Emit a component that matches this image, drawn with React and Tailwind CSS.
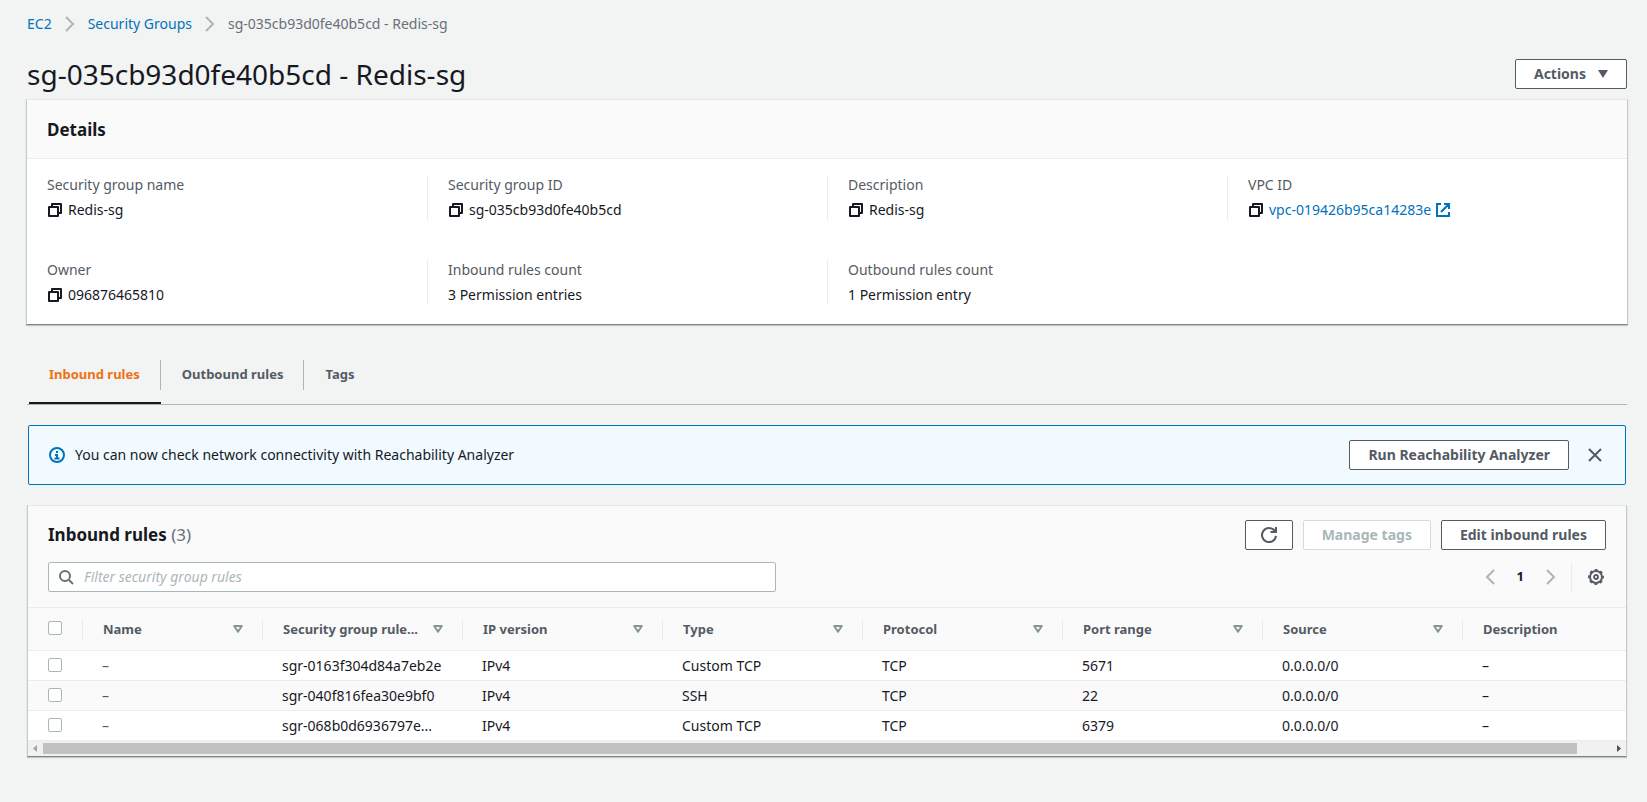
import { useState } from 'react'
import clsx from 'clsx'

const RULES = [
  { id: 'sgr-0163f304d84a7eb2e', name: '–', ip: 'IPv4', type: 'Custom TCP', protocol: 'TCP', port: '5671', source: '0.0.0.0/0', description: '–' },
  { id: 'sgr-040f816fea30e9bf0', name: '–', ip: 'IPv4', type: 'SSH', protocol: 'TCP', port: '22', source: '0.0.0.0/0', description: '–' },
  { id: 'sgr-068b0d6936797e...', name: '–', ip: 'IPv4', type: 'Custom TCP', protocol: 'TCP', port: '6379', source: '0.0.0.0/0', description: '–' },
]

const COLUMNS = [
  { key: 'name', label: 'Name', sortable: true },
  { key: 'id', label: 'Security group rule...', sortable: true },
  { key: 'ip', label: 'IP version', sortable: true },
  { key: 'type', label: 'Type', sortable: true },
  { key: 'protocol', label: 'Protocol', sortable: true },
  { key: 'port', label: 'Port range', sortable: true },
  { key: 'source', label: 'Source', sortable: true },
  { key: 'description', label: 'Description', sortable: false },
]

const DETAILS = [
  { label: 'Security group name', value: 'Redis-sg', copy: true },
  { label: 'Security group ID', value: 'sg-035cb93d0fe40b5cd', copy: true },
  { label: 'Description', value: 'Redis-sg', copy: true },
  { label: 'VPC ID', value: 'vpc-019426b95ca14283e', copy: true, link: true },
  { label: 'Owner', value: '096876465810', copy: true },
  { label: 'Inbound rules count', value: '3 Permission entries' },
  { label: 'Outbound rules count', value: '1 Permission entry' },
]

const TABS = ['Inbound rules', 'Outbound rules', 'Tags']

function Icon({ children, className }) {
  return (
    <svg viewBox="0 0 16 16" className={clsx('size-4 shrink-0 fill-none stroke-current stroke-2', className)} aria-hidden="true">
      {children}
    </svg>
  )
}

const CopyIcon = () => <Icon><path d="M2 5h9v9H2zM5 5V2h9v9h-3" strokeLinejoin="round" /></Icon>
const ExternalIcon = () => <Icon><path d="M6 2H2v12h12v-4M9 2h5v5M14 2L6 10" /></Icon>
const ChevronIcon = ({ left, className }) => <Icon className={className}><path d={left ? 'M12 1L5 8l7 7' : 'M4 1l7 7-7 7'} /></Icon>

function GearIcon() {
  return (
    <Icon>
      <circle cx="8" cy="8" r="6" />
      {/* eight teeth around the rim */}
      <circle cx="8" cy="8" r="7.2" strokeWidth="1.6" strokeDasharray="2.83 2.83" strokeDashoffset="1.41" />
      <circle cx="8" cy="8" r="2" strokeWidth="1.8" />
    </Icon>
  )
}

function Caret({ hollow }) {
  return (
    <svg viewBox="0 0 10 8" className="h-2 w-[10px] shrink-0" aria-hidden="true">
      {hollow
        ? <path d="M1.2 1h7.6L5 6.8z" fill="none" stroke="currentColor" strokeWidth="2" strokeLinejoin="round" />
        : <path d="M0 0h10L5 8z" fill="currentColor" />}
    </svg>
  )
}

function Button({ children, className, ...props }) {
  return (
    <button
      type="button"
      className={clsx(
        'flex h-[30px] items-center justify-center gap-3 rounded-[2px] border border-[#545b64] bg-white text-sm font-bold text-[#545b64]',
        'disabled:border-[#d5dbdb] disabled:text-[#aab7b8]',
        className,
      )}
      {...props}
    >
      {children}
    </button>
  )
}

function Card({ children, className }) {
  return (
    <section className={clsx('border border-x-[#c4caca] border-t-[#e4e8e8] border-b-[#7b8585] bg-white shadow-[0_1px_1px_rgba(0,28,36,0.2)]', className)}>
      {children}
    </section>
  )
}

function Checkbox({ label }) {
  return (
    <input
      type="checkbox"
      aria-label={label}
      className="block size-[14px] appearance-none rounded-[2px] border border-[#aab7b8] bg-white checked:bg-[#0073bb]"
    />
  )
}

function Breadcrumbs() {
  return (
    <nav aria-label="Breadcrumbs">
      <ol className="flex items-center gap-[10px] text-sm">
        <li><a href="#ec2" className="text-[#0073bb]">EC2</a></li>
        <li className="flex items-center gap-[10px]">
          <ChevronIcon className="text-[#aab7b8]" />
          <a href="#groups" className="text-[#0073bb]">Security Groups</a>
        </li>
        <li className="flex items-center gap-[10px] text-[#687078]">
          <ChevronIcon className="text-[#aab7b8]" />
          sg-035cb93d0fe40b5cd - Redis-sg
        </li>
      </ol>
    </nav>
  )
}

function Details() {
  return (
    <Card className="-mx-px">
      <h2 className="border-b border-[#eaeded] bg-[#fafafa] px-5 pt-[17px] pb-[15px] text-[17px] leading-[26px] font-bold">Details</h2>
      <dl className="grid grid-cols-4 gap-y-10 pt-4 pb-[19px]">
        {DETAILS.map((d, i) => (
          <div key={d.label} className={clsx('flex flex-col gap-[5px] pl-5 text-sm', i % 4 !== 0 && 'border-l border-[#eaeded]')}>
            <dt className="text-[#545b64]">{d.label}</dt>
            <dd className="flex items-center gap-[5px]">
              {d.copy && <button type="button" aria-label={'Copy ' + d.label}><CopyIcon /></button>}
              {d.link
                ? <a href="#vpc" className="flex items-center gap-1 text-[#0073bb]">{d.value}<ExternalIcon /></a>
                : d.value}
            </dd>
          </div>
        ))}
      </dl>
    </Card>
  )
}

function Tabs({ active, onChange }) {
  return (
    <div role="tablist" className="flex gap-px border-b border-[#aab7b8] pl-[2px]">
      {TABS.map((t, i) => (
        <button
          key={t}
          type="button"
          role="tab"
          aria-selected={t === active}
          onClick={() => onChange(t)}
          className={clsx('border-b-2 pb-3 text-[13px] font-bold', t === active ? 'border-[#16191f] text-[#ec7211]' : 'border-transparent text-[#545b64]')}
        >
          <span className={clsx('flex h-[30px] items-center px-5', i < TABS.length - 1 && 'border-r border-[#aab7b8]')}>{t}</span>
        </button>
      ))}
    </div>
  )
}

function ReachabilityBanner({ onClose }) {
  return (
    <div className="mx-px flex items-center gap-[10px] rounded-[2px] border border-[#0073bb] bg-[#f1faff] py-[14px] pr-[22px] pl-5 text-sm">
      <Icon className="text-[#0073bb]">
        <circle cx="8" cy="8" r="7" />
        <path d="M7 5h2M6 8h2v3M5.5 11.5h5" />
      </Icon>
      <p className="flex-1">You can now check network connectivity with Reachability Analyzer</p>
      <Button className="px-[18px]">Run Reachability Analyzer</Button>
      <button type="button" aria-label="Dismiss" onClick={onClose} className="ml-2 text-[#545b64]">
        <Icon><path d="M2 2l12 12M14 2L2 14" /></Icon>
      </button>
    </div>
  )
}

function RulesTable() {
  return (
    <div className="overflow-x-auto [scrollbar-width:none]">
      <table className="w-[1634px] table-fixed border-collapse text-left text-sm">
        <colgroup>
          <col className="w-[54px]" />
          <col className="w-[180px]" />
          <col span="7" className="w-[200px]" />
        </colgroup>
        <thead className="bg-[#fafafa]">
          <tr className="h-[43px] border-y border-[#eaeded]">
            <th className="pb-[2px] pl-5"><Checkbox label="Select all rules" /></th>
            {COLUMNS.map(c => (
              <th key={c.key} scope="col" className="p-0 text-[13px] text-[#545b64]">
                <div className="flex h-[21px] items-center justify-between border-l border-[#eaeded] pr-[19px] pl-5">
                  {c.label}
                  {c.sortable && <button type="button" aria-label={'Sort by ' + c.label} className="text-[#879596]"><Caret hollow /></button>}
                </div>
              </th>
            ))}
          </tr>
        </thead>
        <tbody>
          {RULES.map(r => (
            <tr key={r.id} className="h-[30px] border-b border-[#eaeded] even:bg-[#fafafa]">
              <td className="pb-[2px] pl-5"><Checkbox label={'Select ' + r.id} /></td>
              {COLUMNS.map(c => (
                <td key={c.key} className={clsx('truncate pl-5', c.key === 'name' && 'text-[#545b64]')}>{r[c.key]}</td>
              ))}
            </tr>
          ))}
        </tbody>
      </table>
    </div>
  )
}

function ScrollBar() {
  return (
    <div className="flex h-[15px] items-center bg-[#f1f1f1]">
      <svg viewBox="0 0 15 15" className="size-[15px]" aria-hidden="true"><path d="M9 4v7L5 7.5z" fill="#a3a3a3" /></svg>
      <div className="h-[11px] flex-1"><div className="h-full w-[97.8%] bg-[#c1c1c1]" /></div>
      <svg viewBox="0 0 15 15" className="size-[15px]" aria-hidden="true"><path d="M6 4v7l4-3.5z" fill="#505050" /></svg>
    </div>
  )
}

function InboundRules() {
  const [filter, setFilter] = useState('')

  return (
    <Card>
      <div className="bg-[#fafafa] px-5 pt-[14px] pb-[15px]">
        <div className="flex items-center justify-between">
          <h2 className="text-[17px] font-bold">Inbound rules <span className="font-normal text-[#687078]">(3)</span></h2>
          <div className="flex gap-[10px]">
            <Button aria-label="Refresh" className="px-[15px]">
              <Icon><path d="M15 8.8A7 7 0 1 1 13.6 3.8M15 0v5H9.5M15 5l-3-3" /></Icon>
            </Button>
            <Button disabled className="px-[18px]">Manage tags</Button>
            <Button className="px-[18px]">Edit inbound rules</Button>
          </div>
        </div>
        <div className="mt-3 flex items-center justify-between">
          <label className="flex h-[30px] max-w-[728px] flex-1 items-center gap-[10px] rounded-[2px] border border-[#aab7b8] bg-white px-[9px] text-[#687078]">
            <Icon><circle cx="7" cy="7" r="5" /><path d="M11 11l4 4" /></Icon>
            <input
              type="text"
              aria-label="Filter security group rules"
              placeholder="Filter security group rules"
              value={filter}
              onChange={e => setFilter(e.target.value)}
              className="flex-1 text-sm text-[#16191f] outline-none placeholder:text-[#aab7b8] placeholder:italic"
            />
          </label>
          <div className="flex items-center pr-[2px] text-[13px]">
            <button type="button" aria-label="Previous page" className="text-[#aab7b8]"><ChevronIcon left /></button>
            <button type="button" aria-label="Page 1" className="px-[19px] font-bold">1</button>
            <button type="button" aria-label="Next page" className="text-[#aab7b8]"><ChevronIcon /></button>
            <span className="ml-3 h-[30px] w-px bg-[#eaeded]" />
            <button type="button" aria-label="Preferences" className="ml-4 text-[#545b64]"><GearIcon /></button>
          </div>
        </div>
      </div>
      <RulesTable />
      <ScrollBar />
    </Card>
  )
}

export default function App() {
  const [tab, setTab] = useState('Inbound rules')
  const [banner, setBanner] = useState(true)

  return (
    <main className="min-h-screen bg-[#f2f3f3] pt-[14px] pr-5 pb-10 pl-[27px] font-['Noto_Sans',sans-serif] text-[#16191f]">
      <Breadcrumbs />
      <div className="mt-6 flex items-center justify-between pb-[9px]">
        <h1 className="text-[28px] leading-8">sg-035cb93d0fe40b5cd - Redis-sg</h1>
        <Button className="px-[18px]">Actions <Caret /></Button>
      </div>
      <Details />
      <div className="mt-[35px]">
        <Tabs active={tab} onChange={setTab} />
      </div>
      <div className="mt-5 flex flex-col gap-5">
        {banner && <ReachabilityBanner onClose={() => setBanner(false)} />}
        <InboundRules />
      </div>
    </main>
  )
}
